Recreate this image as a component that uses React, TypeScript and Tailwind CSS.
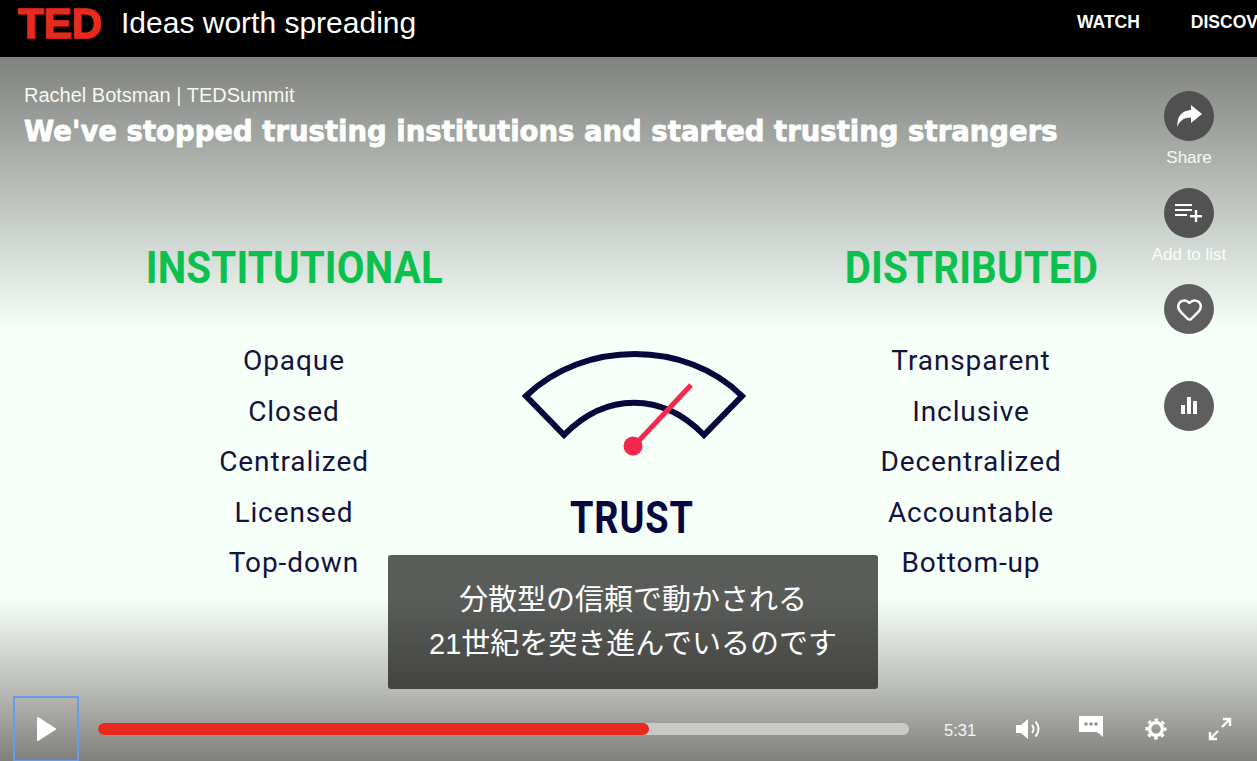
import { Heart } from "lucide-react";

const leftItems = ["Opaque", "Closed", "Centralized", "Licensed", "Top-down"];
const rightItems = ["Transparent", "Inclusive", "Decentralized", "Accountable", "Bottom-up"];

function SlideColumn({ title, items }: { title: string; items: string[] }) {
  return (
    <div className="w-[300px] shrink-0 flex flex-col items-center">
      <h2 className="text-[44px] leading-[52px] font-bold text-[#0cc04e] font-['Roboto',sans-serif] tracking-[0.2px] whitespace-nowrap scale-x-[0.915]">
        {title}
      </h2>
      <ul className="mt-[42px] flex flex-col items-center">
        {items.map((item) => (
          <li
            key={item}
            className="h-[50.5px] leading-[50.5px] text-[28px] text-[#14123f] font-['Roboto',sans-serif] tracking-[0.9px] whitespace-nowrap"
          >
            {item}
          </li>
        ))}
      </ul>
    </div>
  );
}

function Gauge() {
  return (
    <svg width="270" height="130" viewBox="0 0 270 130" className="block">
      <path
        d="M26 56 C84 0 186 0 242 56 L204 95 C162 52 106 52 64 95 Z"
        fill="none"
        stroke="#07063d"
        strokeWidth="6"
      />
      <line x1="133" y1="107" x2="191" y2="45" stroke="#f5274f" strokeWidth="5" />
      <circle cx="133" cy="106" r="9.5" fill="#f5274f" />
    </svg>
  );
}

function ActionButton({
  label,
  tone,
  children,
}: {
  label: string;
  tone: string;
  children: React.ReactNode;
}) {
  return (
    <div className="h-[96.5px] w-[100px] flex flex-col items-center">
      <div className={`w-[50px] h-[50px] rounded-full flex items-center justify-center ${tone}`}>
        {children}
      </div>
      <span className="mt-[6px] text-[17px] leading-[21px] text-white/90 whitespace-nowrap">{label}</span>
    </div>
  );
}

export default function App() {
  return (
    <div className="w-screen h-screen overflow-hidden flex flex-col bg-black font-['Liberation_Sans',Arial,sans-serif]">
      {/* Header */}
      <header className="h-[57px] shrink-0 bg-black flex items-start relative overflow-hidden">
        <span className="ml-[18px] mt-0 text-[42px] leading-[48px] font-bold text-[#e62b1e] [-webkit-text-stroke:1.5px_#e62b1e]">
          TED
        </span>
        <span className="ml-[19px] mt-[5px] text-[30px] leading-[36px] text-white whitespace-nowrap">
          Ideas worth spreading
        </span>
        <nav className="ml-auto flex gap-[51px] mt-[12px] text-[17.5px] leading-5 font-bold text-white whitespace-nowrap w-[180px] shrink-0">
          <span>WATCH</span>
          <span>DISCOVER</span>
        </nav>
      </header>

      {/* Player */}
      <main className="flex-1 relative overflow-hidden bg-[linear-gradient(to_bottom,#7f817d_0px,#f7fff9_273px,#f7fff9_540px,#b9bbb7_633px,#7f807c_704px)]">
        {/* Slide frame */}
        <div className="pt-[185px] pl-[144px] flex items-start">
          <SlideColumn title="INSTITUTIONAL" items={leftItems} />
          <div className="ml-[38px] w-[300px] shrink-0 flex flex-col items-center pt-[98px]">
            <div className="ml-[6px]">
              <Gauge />
            </div>
            <span className="mt-[22px] text-[44px] leading-[52px] font-bold text-[#07063d] font-['Roboto',sans-serif] tracking-[1px] scale-x-[0.86]">
              TRUST
            </span>
          </div>
          <div className="ml-[39px]">
            <SlideColumn title="DISTRIBUTED" items={rightItems} />
          </div>
        </div>

        {/* Talk info */}
        <div className="absolute left-[24px] top-[26px]">
          <p className="text-xl leading-6 text-white/95">Rachel Botsman | TEDSummit</p>
          <h1 className="mt-[8px] text-[27.5px] leading-8 font-bold font-['DejaVu_Sans',sans-serif] text-white [-webkit-text-stroke:0.8px_white] whitespace-nowrap">
            We've stopped trusting institutions and started trusting strangers
          </h1>
        </div>

        {/* Actions */}
        <div className="absolute left-[1139px] top-[34px] flex flex-col items-center">
          <ActionButton label="Share" tone="bg-[#505050]">
            <svg width="28" height="26" viewBox="0 0 28 26" fill="white">
              <path d="M16 2 L27 11 L16 20 L16 14.5 C9 14.5 4.5 17.5 2.5 24 C1.5 14 6.5 7.5 16 7 Z" />
            </svg>
          </ActionButton>
          <ActionButton label="Add to list" tone="bg-[#525252]">
            <svg width="30" height="22" viewBox="0 0 30 22" fill="white">
              <rect x="1" y="2" width="17" height="2" />
              <rect x="1" y="7" width="17" height="2" />
              <rect x="1" y="12" width="12" height="2" />
              <rect x="16" y="13" width="12" height="2.4" />
              <rect x="20.8" y="8" width="2.4" height="12" />
            </svg>
          </ActionButton>
          <ActionButton label="Like" tone="bg-[#5e5e5e]">
            <Heart size={27} color="white" strokeWidth={2.2} />
          </ActionButton>
          <ActionButton label="Rate" tone="bg-[#5e5e5e]">
            <svg width="20" height="20" viewBox="0 0 20 20" fill="white">
              <rect x="2" y="9" width="4" height="9" />
              <rect x="8" y="1" width="4" height="17" />
              <rect x="14" y="5" width="4" height="13" />
            </svg>
          </ActionButton>
        </div>

        {/* Captions */}
        <div className="absolute left-[388px] top-[498px] w-[490px] h-[134px] rounded-[3px] bg-[#050403]/[.65] flex flex-col items-center justify-center text-white text-[29px] leading-[44px] font-['Liberation_Sans','Noto_Sans_CJK_JP',sans-serif]">
          <span>分散型の信頼で動かされる</span>
          <span>21世紀を突き進んでいるのです</span>
        </div>

        {/* Controls */}
        <div className="absolute left-[13px] right-0 top-[639px] h-[65px] flex items-center">
          <button className="w-[66px] h-[66px] shrink-0 border-2 border-[#6a9ae8] flex items-center justify-center">
            <svg width="22" height="26" viewBox="0 0 22 26">
              <path d="M3 2 L20 13 L3 24 Z" fill="white" stroke="white" strokeWidth="2" strokeLinejoin="round" />
            </svg>
          </button>
          <div className="ml-[19px] w-[811px] h-3 rounded-full bg-[#c9c9c7] shrink-0 overflow-hidden">
            <div className="w-[551px] h-full bg-[#e62b1e] rounded-r-full" />
          </div>
          <span className="ml-[35px] mt-[2px] w-[32px] text-[16.5px] leading-5 text-white/90">5:31</span>
          <svg width="26" height="24" viewBox="0 0 26 24" className="ml-[39px] shrink-0">
            <path d="M1 8 H6 L13 2 V22 L6 16 H1 Z" fill="white" />
            <path d="M17 8 C19 10.5 19 13.5 17 16" stroke="white" strokeWidth="2" fill="none" />
            <path d="M20.5 4.5 C24.5 9 24.5 15 20.5 19.5" stroke="white" strokeWidth="2" fill="none" />
          </svg>
          <svg width="24" height="22" viewBox="0 0 24 22" className="ml-[38px] mb-[4px] shrink-0">
            <path d="M0 0 H24 V21 L18 16 H0 Z" fill="white" />
            <circle cx="7" cy="8" r="1.7" fill="#8a8b88" />
            <circle cx="12" cy="8" r="1.7" fill="#8a8b88" />
            <circle cx="17" cy="8" r="1.7" fill="#8a8b88" />
          </svg>
          <svg width="22" height="22" viewBox="0 0 24 24" className="ml-[42px] mr-[1px] shrink-0" fill="none" stroke="white">
            <circle cx="12" cy="12" r="7" strokeWidth="3.6" />
            <circle cx="12" cy="12" r="10" strokeWidth="3" strokeDasharray="3.9 3.95" strokeDashoffset="1.95" />
          </svg>
          <svg width="24" height="24" viewBox="0 0 24 24" className="ml-[40px] shrink-0" fill="none" stroke="white" strokeWidth="2.4">
            <path d="M14 10 L22 2 M15 2 H22 V9" />
            <path d="M10 14 L2 22 M2 15 V22 H9" />
          </svg>
        </div>
      </main>
    </div>
  );
}
